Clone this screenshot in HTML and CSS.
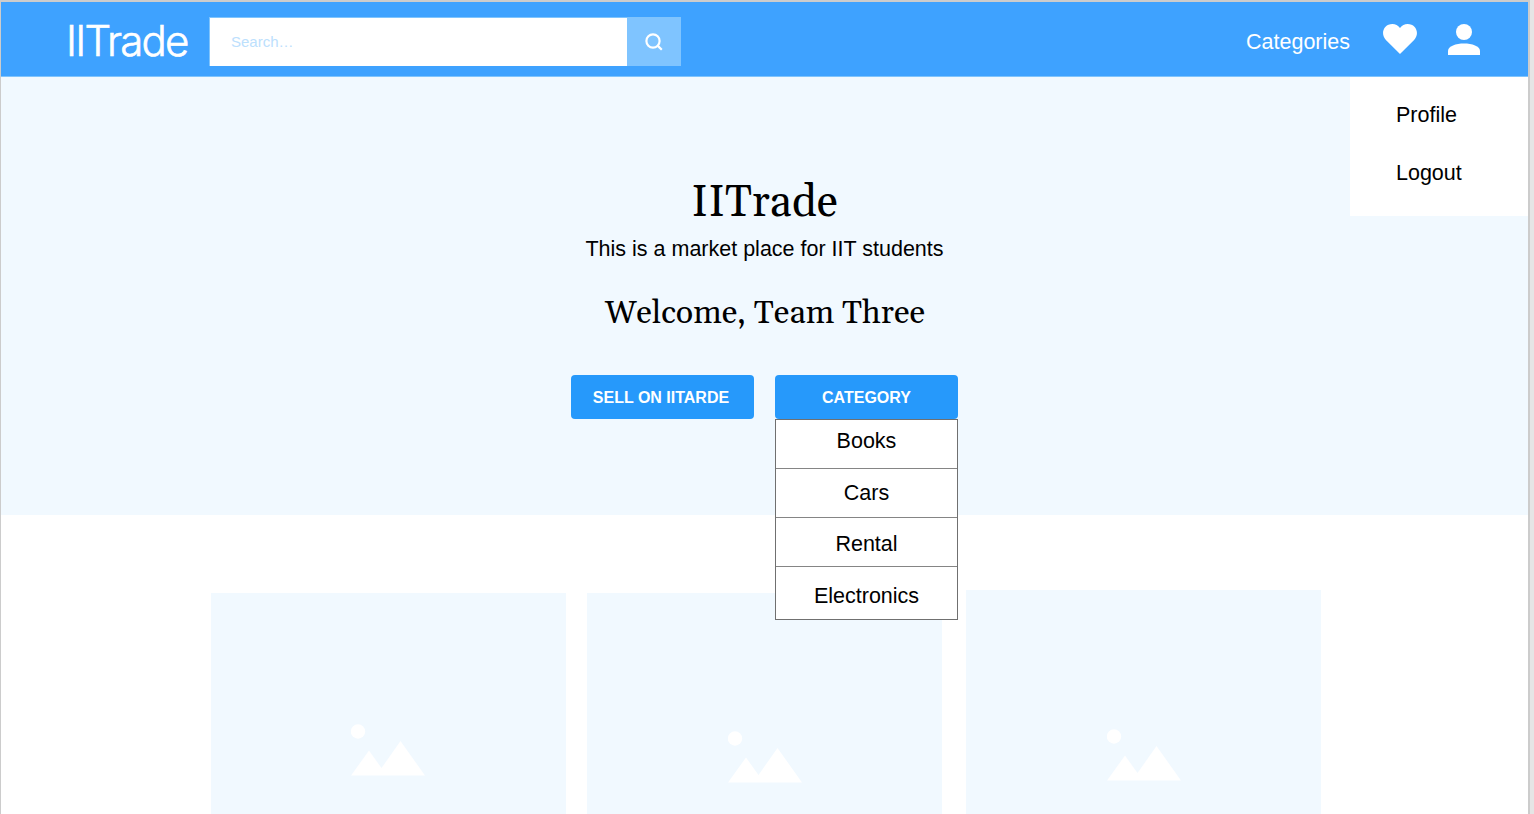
FILE: index.html
```html
<!DOCTYPE html>
<html lang="en">
<head>
<meta charset="utf-8">
<title>IITrade</title>
<link rel="stylesheet" href="styles.css">
</head>
<body>
<div class="page">
  <header class="header">
    <div class="logo">IITrade</div>
    <form class="search">
      <input class="search-input" type="text" placeholder="Search…" aria-label="Search">
      <button class="search-button" type="button" aria-label="Search">
        <svg width="18" height="18" viewBox="0 0 18 18" fill="none" stroke="#fff" stroke-width="2.2"><circle cx="8" cy="8" r="6.6"/><path d="M12.600 12.600 16.800 16.800"/></svg>
      </button>
    </form>
    <nav class="nav">
      <a class="nav-link">Categories</a>
      <svg class="heart" width="34" height="30" viewBox="0 0 34 30" fill="#fff"><path d="M17 30 2.900 16C-3 9.700.8 0 9.400 0 12.500 0 15 1.300 17 4 19 1.300 21.500 0 24.600 0 33.200 0 37 9.700 31.100 16Z"/></svg>
      <svg class="user" width="32" height="31" viewBox="0 0 32 31" fill="#fff"><circle cx="16" cy="8" r="8"/><path d="M0 31V27C0 22 8 19.400 16 19.400S32 22 32 27V31Z"/></svg>
    </nav>
    <div class="account-menu">
      <a>Profile</a>
      <a>Logout</a>
    </div>
  </header>
  <main>
    <section class="hero">
      <h1 class="title">IITrade</h1>
      <p class="tagline">This is a market place for IIT students</p>
      <h2 class="welcome">Welcome, Team Three</h2>
      <div class="actions">
        <button class="button button-sell">SELL ON IITARDE</button>
        <div class="dropdown">
          <button class="button">CATEGORY</button>
          <ul class="dropdown-list">
            <li>Books</li>
            <li>Cars</li>
            <li>Rental</li>
            <li>Electronics</li>
          </ul>
        </div>
      </div>
    </section>
    <section class="cards">
      <article class="card card-first"><svg width="74" height="52" viewBox="0 0 74 52" fill="#fff"><circle cx="7" cy="7.500" r="7.200"/><path d="M0 51.500 18 26.500 30.500 44 49.500 17 74 51.500Z"/></svg></article>
      <article class="card card-second"><svg width="74" height="52" viewBox="0 0 74 52" fill="#fff"><circle cx="7" cy="7.500" r="7.200"/><path d="M0 51.500 18 26.500 30.500 44 49.500 17 74 51.500Z"/></svg></article>
      <article class="card card-third"><svg width="74" height="52" viewBox="0 0 74 52" fill="#fff"><circle cx="7" cy="7.500" r="7.200"/><path d="M0 51.500 18 26.500 30.500 44 49.500 17 74 51.500Z"/></svg></article>
    </section>
  </main>
</div>
</body>
</html>
```
FILE: styles.css
```css
* { box-sizing: border-box; }
body {
  margin: 0;
  height: 814px;
  overflow: hidden;
  background: #e5e5e5;
  color: #000;
  font-family: "Liberation Sans", Arial, sans-serif;
  font-size: 21.5px;
}
.page {
  width: 1530px;
  height: 814px;
  overflow: hidden;
  border: solid #ccc;
  border-width: 2px 2px 0 1px;
  background: #fff;
}
.header {
  position: relative;
  display: flex;
  align-items: flex-start;
  height: 75px;
  padding-left: 65px;
  border-bottom: 1px solid #7fc4fd;
  background: #3ea2ff;
  color: #fff;
}
.logo {
  width: 143px;
  margin-top: 14px;
  font-family: Inter, sans-serif;
  font-size: 42px;
  font-weight: 300;
  line-height: 50px;
  letter-spacing: -1.8px;
  -webkit-text-stroke: .6px #fff;
}
.search {
  display: flex;
  width: 472px;
  height: 49px;
  margin-top: 15px;
  border: 1px solid #7fc4fd;
  border-width: 1px 0 0 1px;
}
.search-input {
  width: 417px;
  padding: 0 21px 2px;
  border: 0;
  background: #fff;
  font: 15px "Liberation Sans", Arial, sans-serif;
}
.search-input::placeholder { color: #bce0fd; opacity: 1; }
.search-button {
  display: grid;
  place-items: center;
  flex: 1;
  padding: 0 0 1px;
  border: 0;
  background: #7fc4ff;
}
.nav {
  display: flex;
  align-items: flex-start;
  margin-left: auto;
  margin-right: 48px;
  padding-top: 22px;
}
.nav-link { margin: 5px 33px 0 0; line-height: 26px; }
.heart { margin-right: 31px; }
.account-menu {
  position: absolute;
  top: 75px;
  right: 0;
  display: flex;
  flex-direction: column;
  gap: 32px;
  width: 178px;
  height: 139px;
  padding: 25px 0 0 46px;
  background: #fff;
  color: #000;
  line-height: 26px;
}
.hero {
  display: flex;
  flex-direction: column;
  align-items: center;
  height: 438px;
  padding-top: 101px;
  background: #f1f9ff;
}
.title, .welcome, .tagline { margin: 0; white-space: nowrap; font-weight: 400; }
.title, .welcome { font-family: Gelasio, Georgia, "Liberation Serif", serif; }
.title { font-size: 43.5px; line-height: 52px; }
.tagline { margin-top: 6px; line-height: 26px; }
.welcome { margin-top: 32px; padding-left: 1px; font-size: 32.3px; line-height: 40px; }
.actions { display: flex; gap: 21px; margin-top: 41px; }
.button {
  display: block;
  width: 183px;
  height: 44px;
  padding: 2px 0 0;
  border: 0;
  border-radius: 4px;
  background: #2699fb;
  color: #fff;
  font: bold 16px "Liberation Sans", Arial, sans-serif;
}
.button-sell { padding-right: 3px; }
.dropdown { position: relative; }
.dropdown-list {
  position: absolute;
  top: 44px;
  left: 0;
  display: grid;
  grid-template-rows: 49px 49px 49px 52px;
  width: 183px;
  margin: 0;
  padding: 0;
  border: 1px solid #707070;
  background: #fff;
  list-style: none;
  text-align: center;
}
.dropdown-list li { padding-top: 11px; line-height: 26px; border-bottom: 1px solid #858585; }
.dropdown-list li:first-child { padding-top: 8px; }
.dropdown-list li:nth-child(3) { padding-top: 13px; }
.dropdown-list li:last-child { padding-top: 16px; border-bottom: 0; }
.cards {
  display: grid;
  grid-template-columns: 355px 355px 355px;
  column-gap: 21px;
  padding: 75px 0 0 210px;
}
.card {
  display: flex;
  justify-content: center;
  height: 300px;
  margin-top: 3px;
  padding-top: 131px;
  background: #f1f9ff;
}
.card-first { padding-right: 1px; }
.card-second { padding-top: 138px; }
.card-third { margin: 0 0 0 3px; width: 355px; padding-top: 139px; }
```
